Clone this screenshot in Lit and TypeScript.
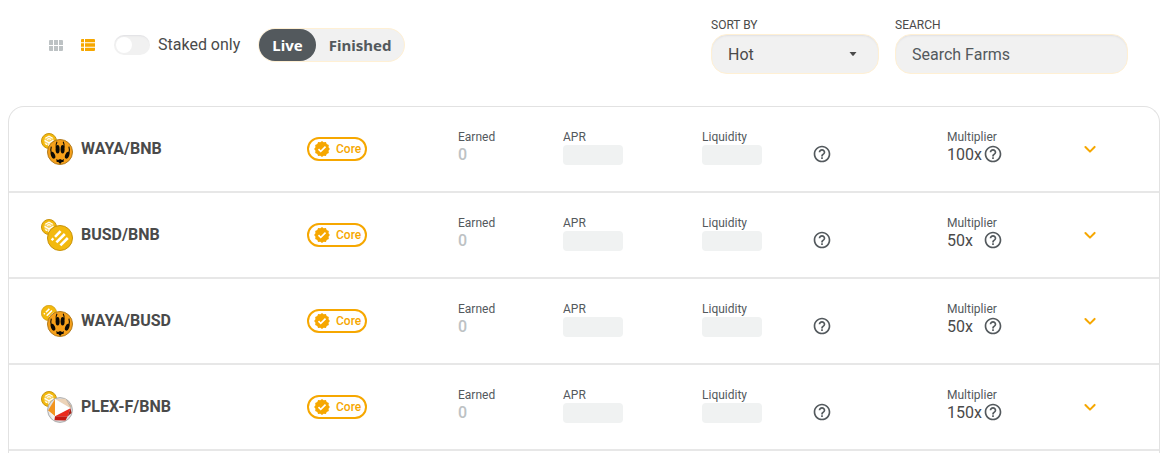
import { LitElement, html, svg, css } from "lit";
import { customElement, property, state } from "lit/decorators.js";
import { classMap } from "lit/directives/class-map.js";

type Token = "WAYA" | "BNB" | "BUSD" | "PLEX";

interface Farm {
  name: string;
  front: Token;
  back: Token;
  earned: string;
  multiplier: string;
}

const FARMS: Farm[] = [
  { name: "WAYA/BNB", front: "WAYA", back: "BNB", earned: "0", multiplier: "100x" },
  { name: "BUSD/BNB", front: "BUSD", back: "BNB", earned: "0", multiplier: "50x" },
  { name: "WAYA/BUSD", front: "WAYA", back: "BUSD", earned: "0", multiplier: "50x" },
  { name: "PLEX-F/BNB", front: "PLEX", back: "BNB", earned: "0", multiplier: "150x" },
];

/* Each token is drawn in a 26 x 26 box. */
const TOKENS = {
  WAYA: svg`
    <circle cx="13" cy="13" r="12.500" fill="#f6a01a" stroke="#b07a1c" stroke-width="1"/>
    <g fill="#0c0a06">
      <ellipse cx="10.600" cy="10.200" rx="2" ry="4.300"/>
      <ellipse cx="15.600" cy="10.200" rx="2" ry="4.300"/>
      <ellipse cx="6" cy="16.200" rx="2" ry="3.600" transform="rotate(-22 6 16.200)"/>
      <ellipse cx="20.200" cy="16.200" rx="2" ry="3.600" transform="rotate(22 20.200 16.200)"/>
      <path d="M9.300 20 11 21 13.100 20 15.200 21 16.900 20 16.500 23 14.900 23 13.100 25 11.300 23 9.700 23Z"/>
    </g>
    <path d="M9.200 8.500Q8.600 5.500 10 2.800M17 8.500Q17.600 5.500 16.200 2.800M4.400 14.200Q3.200 11 4.300 7.600M21.800 14.200Q23 11 21.900 7.600" fill="none" stroke="#0c0a06" stroke-width="1.100"/>`,
  BUSD: svg`
    <circle cx="13" cy="13" r="12.500" fill="#f3b90e" stroke="#c8920a" stroke-width="1"/>
    <path d="M8 11.800 13.600 6.200M9.400 17.400 17.800 9M13.400 20.400 20.800 13M4.700 13.500 6.300 15.100" fill="none" stroke="#fff" stroke-width="2.600"/>`,
  BNB: svg`
    <circle cx="13" cy="13" r="12.200" fill="#f3b90e" stroke="#c8920a" stroke-width="1.600"/>
    <path d="M13 4.500 20.400 8.800V17.300L13 21.500 5.600 17.300V8.800Z" fill="#f8d365"/>
    <path d="M7 8.500 13 5 19 8.500M5.800 12 13 16 20.200 12M13 16V21.500M7 17 10 19M19 17 16 19M10 10.500 13 9 16 10.500" fill="none" stroke="#fff" stroke-width="1.900"/>`,
  PLEX: svg`
    <circle cx="13" cy="13" r="12.400" fill="#dfe0e1" stroke="#a5a5a5" stroke-width=".9"/>
    <path d="M8 2 18.500 1.800 23.500 11.300Z" fill="#ecd3b8"/>
    <path d="M18.500 1.800 24.500 9 23.500 11.300Z" fill="#c7b19c"/>
    <path d="M8 2 1 13.500 8 19.300Z" fill="#f2941f"/>
    <path d="M1 13.500 8 19.300 6.500 23.500Z" fill="#f2f0ed"/>
    <path d="M8 2 23.500 11.300 8 19.300Z" fill="#fff"/>
    <path d="M8 19.300 23.500 11.300 20.500 19.500Z" fill="#ea2a1c"/>
    <path d="M8 19.300 20.500 19.500 18.500 23.500 7.500 23.200Z" fill="#c4170f"/>
    <path d="M23.500 11.300 24.500 16 20.500 19.500Z" fill="#a3231a"/>`,
};

const helpIcon = html`<svg class="help-icon" viewBox="0 0 24 24" aria-hidden="true">
  <path d="M11 18H13V16H11V18ZM12 2C6.480 2 2 6.480 2 12C2 17.520 6.480 22 12 22C17.520 22 22 17.520 22 12C22 6.480 17.520 2 12 2ZM12 20C7.590 20 4 16.410 4 12C4 7.590 7.590 4 12 4C16.410 4 20 7.590 20 12C20 16.410 16.410 20 12 20ZM12 6C9.790 6 8 7.790 8 10H10C10 8.900 10.900 8 12 8C13.100 8 14 8.900 14 10C14 12 11 11.750 11 15H13C13 12.750 16 12.500 16 10C16 7.790 14.210 6 12 6Z"/>
</svg>`;

@customElement("token-pair")
class TokenPair extends LitElement {
  @property() front: Token = "BNB";
  @property() back: Token = "BNB";

  static styles = css`
    :host { display: block; flex: none; width: 32px; height: 32px; }
    svg { display: block; }
  `;

  render() {
    return html`<svg width="32" height="32" viewBox="0 0 32 32" aria-hidden="true">
      <g transform="scale(.615)">${TOKENS[this.back]}</g>
      <g transform="translate(6 6)">${TOKENS[this.front]}</g>
    </svg>`;
  }
}

@customElement("farm-toolbar")
class FarmToolbar extends LitElement {
  @state() view = "list";
  @state() status = "Live";

  static styles = css`
    :host { display: block; }
    .toolbar {
      display: flex;
      flex-wrap: wrap;
      justify-content: space-between;
      align-items: center;
      gap: 16px;
      padding: 16px 32px 32px;
      color: #4a4a4a;
    }
    .group { display: flex; align-items: center; }
    .fields { gap: 16px; }
    button, input, select { font: inherit; color: inherit; margin: 0; }
    .view {
      display: flex;
      align-items: center;
      justify-content: center;
      width: 32px;
      height: 32px;
      padding: 0;
      border: 0;
      background: none;
      color: #bdc2c4;
      cursor: pointer;
    }
    .view.active { color: #f6a700; }
    .view svg { display: block; fill: currentColor; }
    .staked {
      display: flex;
      align-items: center;
      gap: 8px;
      margin: 0 18px 0 10px;
      line-height: 22px;
      cursor: pointer;
    }
    .switch {
      appearance: none;
      display: flex;
      align-items: center;
      width: 36px;
      height: 20px;
      padding: 0 2px;
      box-sizing: border-box;
      border-radius: 10px;
      background: #f1f1f1;
      box-shadow: inset 0 2px 2px -1px rgba(74, 74, 104, 0.1);
      cursor: pointer;
    }
    .switch::before {
      content: "";
      width: 16px;
      height: 16px;
      border-radius: 50%;
      background: #fff;
    }
    .switch:checked { background: #f6a700; justify-content: flex-end; }
    .tabs {
      display: flex;
      border: 1px solid #fff0d4;
      border-radius: 17px;
      background: #f1f1f1;
    }
    .tab {
      height: 32px;
      padding: 0 13px;
      border: 0;
      border-radius: 16px;
      background: none;
      color: #53595d;
      font-family: "Noto Sans", sans-serif;
      font-size: 15px;
      font-weight: 700;
      cursor: pointer;
    }
    .tab.active { background: #53595d; color: #fff; }
    .field { display: flex; flex-direction: column; gap: 1px; }
    .caption { padding-top: 1px; font-size: 12px; line-height: 16px; text-transform: uppercase; }
    .control {
      height: 40px;
      width: 100%;
      box-sizing: border-box;
      padding: 0 16px;
      border: 1px solid #fff0d4;
      border-radius: 16px;
      background: #f1f1f1;
      box-shadow: inset 0 2px 2px -1px rgba(74, 74, 104, 0.1);
      outline: 0;
    }
    .sort { position: relative; width: 168px; }
    .sort .control { appearance: none; padding-top: 2px; cursor: pointer; }
    .arrow {
      position: absolute;
      right: 22px;
      top: 18px;
      pointer-events: none;
      fill: #4a4a4a;
    }
    .search { width: 233px; }
    .search .control { color: #53595d; }
    .search .control::placeholder { color: #53595d; opacity: 1; }
  `;

  render() {
    return html`<div class="toolbar">
      <div class="group">
        <button class=${classMap({ view: true, active: this.view === "grid" })} aria-label="Card view"
          @click=${() => (this.view = "grid")}>
          <svg width="14" height="11" viewBox="0 0 14 11">
            <path d="M0 1Q0 0 1 0H4V5H0ZM5 0H9V5H5ZM10 0H13Q14 0 14 1V5H10ZM0 6H4V11H1Q0 11 0 10ZM5 6H9V11H5ZM10 6H14V10Q14 11 13 11H10Z"/>
          </svg>
        </button>
        <button class=${classMap({ view: true, active: this.view === "list" })} aria-label="Table view"
          @click=${() => (this.view = "list")}>
          <svg width="14" height="12" viewBox="0 0 14 12">
            <path d="M0 1Q0 0 1 0H3V3.300H0ZM4 0H13Q14 0 14 1V3.300H4ZM0 4.300H3V7.700H0ZM4 4.300H14V7.700H4ZM0 8.700H3V12H1Q0 12 0 11ZM4 8.700H14V11Q14 12 13 12H4Z"/>
          </svg>
        </button>
        <label class="staked"><input class="switch" type="checkbox" />Staked only</label>
        <div class="tabs">
          ${["Live", "Finished"].map(
            (name) => html`<button class=${classMap({ tab: true, active: this.status === name })}
              aria-pressed=${this.status === name} @click=${() => (this.status = name)}>${name}</button>`
          )}
        </div>
      </div>
      <div class="group fields">
        <div class="field">
          <label class="caption" for="sort">Sort by</label>
          <div class="sort">
            <select class="control" id="sort">
              <option>Hot</option>
              <option>APR</option>
              <option>Multiplier</option>
              <option>Earned</option>
              <option>Liquidity</option>
            </select>
            <svg class="arrow" width="8" height="4" viewBox="0 0 8 4" aria-hidden="true">
              <path d="M.5 0H7.500L4.500 3.700H3.500Z"/>
            </svg>
          </div>
        </div>
        <div class="field search">
          <label class="caption" for="search">Search</label>
          <input class="control" id="search" type="text" placeholder="Search Farms" />
        </div>
      </div>
    </div>`;
  }
}

@customElement("farm-table")
class FarmTable extends LitElement {
  static styles = css`
    :host {
      display: block;
      border: 1px solid #e2e2e2;
      border-bottom: 0;
      border-radius: 16px 16px 0 0;
      background: #fff;
    }
    table { width: 100%; table-layout: fixed; border-collapse: separate; border-spacing: 0; }
    .c-name { width: 274px; }
    .c-tag { width: 151px; }
    .c-earned { width: 105px; }
    .c-apr { width: 139px; }
    .c-liquidity { width: 245px; }
    .c-multiplier { width: 131px; }
    .c-more { width: 105px; }
    td, th {
      height: 84px;
      padding: 0 0 0 24px;
      border-bottom: 2px solid #e7e7e7;
      text-align: left;
      vertical-align: middle;
    }
    th { padding-left: 32px; }
    .pair { display: flex; align-items: center; gap: 8px; color: #4a4a4a; font-weight: 700; line-height: 22px; }
    .tag {
      display: inline-flex;
      align-items: center;
      gap: 5px;
      height: 24px;
      box-sizing: border-box;
      padding: 0 4px;
      border: 2px solid #f6a700;
      border-radius: 12px;
      color: #f6a700;
      font-size: 12px;
      font-weight: 500;
      vertical-align: middle;
    }
    .tag svg { display: block; width: 18px; height: 18px; fill: currentColor; }
    .cell { display: grid; gap: 2px; padding-bottom: 2px; }
    .label { color: #53595d; font-size: 12px; line-height: 12px; }
    .value { display: flex; align-items: center; height: 20px; color: #4a4a4a; line-height: 22px; }
    .muted { color: #bdc2c4; font-weight: 500; }
    .skeleton { width: 60px; height: 20px; border-radius: 4px; background: #f0f2f2; }
    .spread { width: 130px; justify-content: space-between; }
    .factor { min-width: 36px; }
    .help { display: flex; padding: 0 0 2px; border: 0; background: none; cursor: help; }
    .help-icon { display: block; width: 20px; height: 20px; fill: #53595d; }
    .more { display: flex; padding: 0; border: 0; background: none; cursor: pointer; }
    .more svg { display: block; width: 24px; height: 24px; fill: #f6a700; }
  `;

  row(farm: Farm) {
    return html`<tr>
      <th scope="row">
        <div class="pair"><token-pair .front=${farm.front} .back=${farm.back}></token-pair>${farm.name}</div>
      </th>
      <td>
        <span class="tag"><svg viewBox="0 0 24 24" aria-hidden="true">
          <path fill-rule="evenodd" d="M22.500 12 20.700 9.600 21.100 6.600 18.300 5.400 17.200 2.700 14.200 3.100 12 1.400 9.800 3.100 6.800 2.700 5.700 5.400 2.900 6.600 3.300 9.600 1.500 12 3.300 14.400 2.900 17.400 5.700 18.600 6.800 21.300 9.800 20.900 12 22.600 14.200 20.900 17.200 21.300 18.300 18.600 21.100 17.400 20.700 14.400ZM10.300 16.700 6.500 12.900 8.100 11.300 10.300 13.500 15.900 7.900 17.500 9.500Z"/>
        </svg>Core</span>
      </td>
      <td><div class="cell"><div class="label">Earned</div><div class="value muted">${farm.earned}</div></div></td>
      <td><div class="cell"><div class="label">APR</div><div class="value"><div class="skeleton"></div></div></div></td>
      <td>
        <div class="cell">
          <div class="label">Liquidity</div>
          <div class="value spread">
            <div class="skeleton"></div>
            <button class="help" aria-label="About liquidity">${helpIcon}</button>
          </div>
        </div>
      </td>
      <td>
        <div class="cell">
          <div class="label">Multiplier</div>
          <div class="value">
            <span class="factor">${farm.multiplier}</span>
            <button class="help" aria-label="About the multiplier">${helpIcon}</button>
          </div>
        </div>
      </td>
      <td>
        <button class="more" aria-label="Details"><svg viewBox="0 0 24 24">
          <path d="M8.120 9.290 12 13.170l3.880-3.880a1 1 0 1 1 1.410 1.410l-4.590 4.590a1 1 0 0 1-1.410 0L6.700 10.700a1 1 0 0 1 0-1.410 1 1 0 0 1 1.420 0z"/>
        </svg></button>
      </td>
    </tr>`;
  }

  render() {
    return html`<table aria-label="Farms">
      <colgroup>
        <col class="c-name" /><col class="c-tag" /><col class="c-earned" /><col class="c-apr" />
        <col class="c-liquidity" /><col class="c-multiplier" /><col class="c-more" />
      </colgroup>
      <tbody>${FARMS.map((farm) => this.row(farm))}</tbody>
    </table>`;
  }
}

@customElement("app-root")
class AppRoot extends LitElement {
  static styles = css`
    :host {
      display: flex;
      flex-direction: column;
      min-height: 100vh;
      box-sizing: border-box;
      padding: 0 1px 0 8px;
      background: #fff;
      font: 16px/20px Roboto, "Noto Sans", sans-serif;
    }
    .farms { flex: 1; }
  `;

  render() {
    return html`<farm-toolbar></farm-toolbar><farm-table class="farms"></farm-table>`;
  }
}
